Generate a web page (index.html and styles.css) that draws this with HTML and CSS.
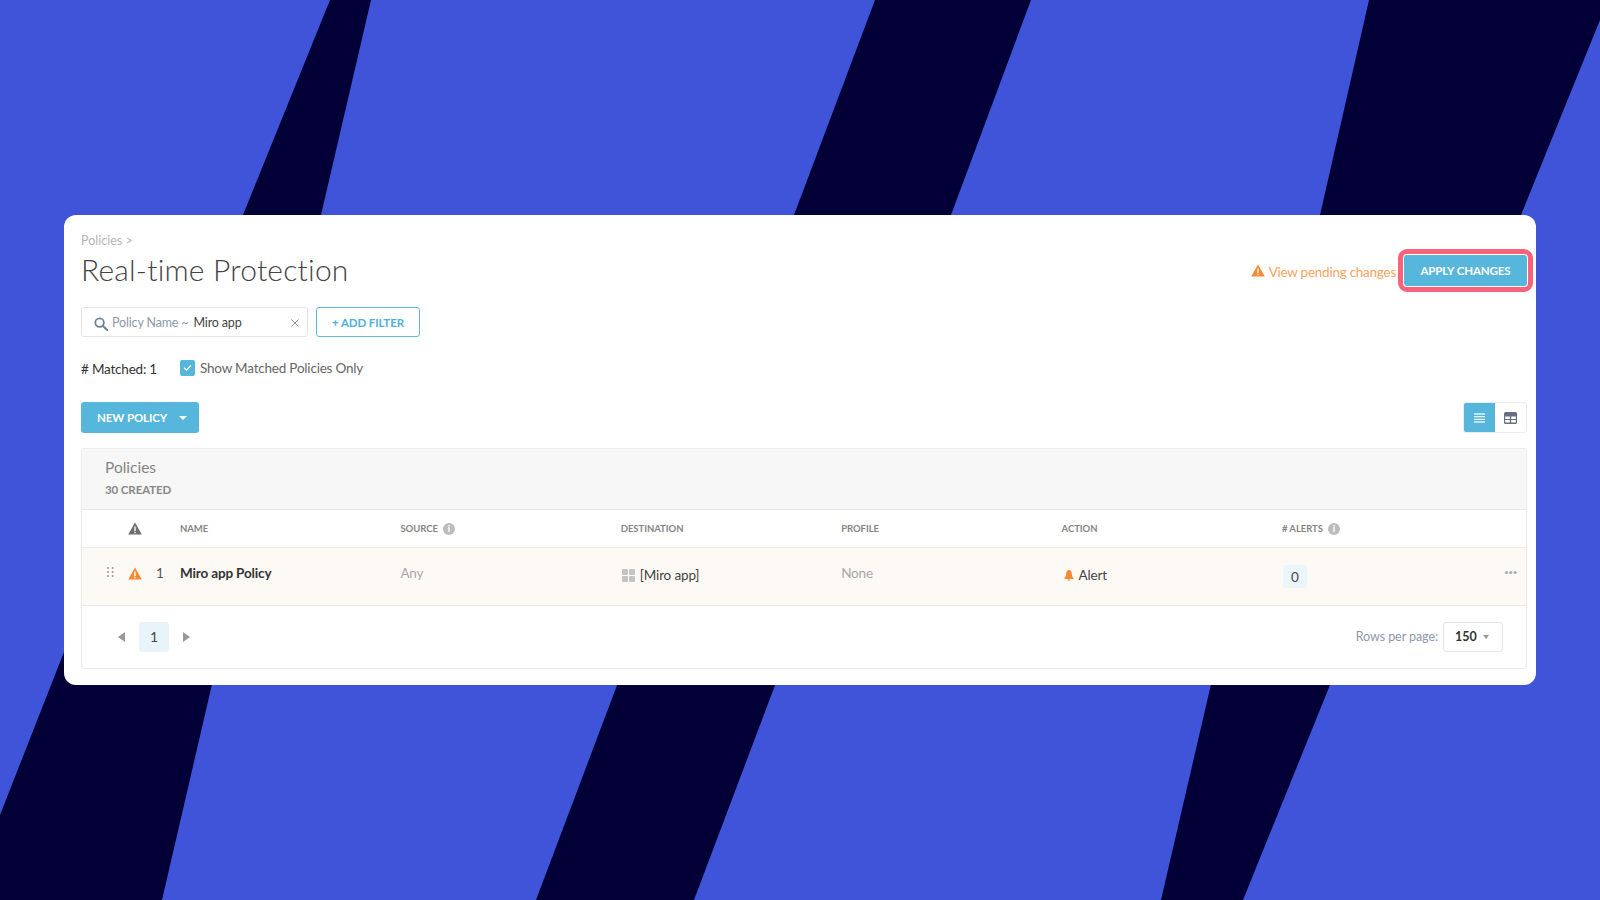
FILE: index.html
```html
<!DOCTYPE html>
<html lang="en">
<head>
    <meta charset="UTF-8">
    <title>Real-time Protection</title>
    <link rel="stylesheet" href="styles.css">
</head>
<body>

    <svg class="stripes" viewBox="0 0 1600 900" aria-hidden="true">
        <polygon points="330,0 371,0 321,215 243,215"/>
        <polygon points="875,0 1031,0 951,215 794,215"/>
        <polygon points="1369,0 1600,0 1600,20 1521,215 1320,215"/>
        <polygon points="64,652 220,652 213,680 162,900 0,900 0,815"/>
        <polygon points="619,680 777,680 694,900 536,900"/>
        <polygon points="1212,680 1332,680 1243,900 1161,900"/>
    </svg>

    <div class="card">
        <div class="page-head">
            <div>
                <div class="breadcrumb">Policies &gt;</div>
                <h1>Real-time Protection</h1>
            </div>
            <div class="head-actions">
                <a class="pending">
                    <svg class="ico-warn" viewBox="0 0 14 13"><path d="M7 .5 13.8 12.6H.2Z" fill="#f58a33"/><rect x="6.3" y="4.6" width="1.4" height="4.4" fill="#fff"/><rect x="6.3" y="9.8" width="1.4" height="1.4" fill="#fff"/></svg>
                    View pending changes
                </a>
                <div class="apply-ring"><button class="btn apply">APPLY CHANGES</button></div>
            </div>
        </div>

        <div class="filters">
            <div class="filter-box">
                <svg class="ico-search" viewBox="0 0 15 15"><circle cx="6" cy="6" r="4.6" fill="none" stroke="#6b7f94" stroke-width="1.8"/><path d="M9.5 9.5 14 14" stroke="#6b7f94" stroke-width="2.2" stroke-linecap="round"/></svg>
                <span class="filter-key">Policy Name ~</span>
                <span class="filter-val">Miro app</span>
                <svg class="ico-x" viewBox="0 0 8 8"><path d="M.5.5 7.5 7.5M7.5.5 .5 7.5" stroke="#8a94a0" stroke-width="1"/></svg>
            </div>
            <button class="add-filter">+ ADD FILTER</button>
        </div>

        <div class="matched-row">
            <span class="matched"># Matched: 1</span>
            <span class="checkbox"><svg viewBox="0 0 15 15"><path d="M4 7.8 6.5 10.2 11 5.2" fill="none" stroke="#fff" stroke-width="1.2"/></svg></span>
            <span class="check-label">Show Matched Policies Only</span>
        </div>

        <div class="toolbar">
            <button class="btn new-policy">NEW POLICY <i class="caret"></i></button>
            <div class="view-toggle">
                <span class="view-btn active">
                    <svg viewBox="0 0 11 10" width="11" height="10"><path d="M0 1h11M0 3.7h11M0 6.4h11M0 9h11" stroke="#e4f4fa" stroke-width="1.3"/></svg>
                </span>
                <span class="view-btn">
                    <svg viewBox="0 0 13 12" width="13" height="12"><rect width="13" height="12" rx="1.5" fill="#667080"/><path d="M1.2 4.4h4.6v2.6H1.2ZM7.2 4.4h4.6v2.6H7.2ZM1.2 8h4.6v2.6H1.2ZM7.2 8h4.6v2.6H7.2Z" fill="#fff"/></svg>
                </span>
            </div>
        </div>

        <div class="panel">
            <div class="panel-head">
                <div class="panel-title">Policies</div>
                <div class="panel-count">30 CREATED</div>
            </div>

            <div class="grid-row col-head">
                <div class="lead">
                    <svg class="ico-warn head-warn" viewBox="0 0 14 13"><path d="M7 .5 13.8 12.6H.2Z" fill="#6f6f6f"/><rect x="6.3" y="4.6" width="1.4" height="4.4" fill="#fff"/><rect x="6.3" y="9.8" width="1.4" height="1.4" fill="#fff"/></svg>
                </div>
                <div>NAME</div>
                <div>SOURCE <i class="info">i</i></div>
                <div>DESTINATION</div>
                <div>PROFILE</div>
                <div>ACTION</div>
                <div># ALERTS <i class="info">i</i></div>
                <div></div>
            </div>

            <div class="grid-row policy-row">
                <div class="lead">
                    <svg class="ico-drag" viewBox="0 0 7 10"><g fill="#8d99a8"><circle cx="1" cy="1" r="1"/><circle cx="5.6" cy="1" r="1"/><circle cx="1" cy="5" r="1"/><circle cx="5.6" cy="5" r="1"/><circle cx="1" cy="9" r="1"/><circle cx="5.6" cy="9" r="1"/></g></svg>
                    <svg class="ico-warn row-warn" viewBox="0 0 14 13"><path d="M7 .5 13.8 12.6H.2Z" fill="#f58a33"/><rect x="6.3" y="4.6" width="1.4" height="4.4" fill="#fff"/><rect x="6.3" y="9.8" width="1.4" height="1.4" fill="#fff"/></svg>
                    <span class="row-num">1</span>
                </div>
                <div class="policy-name">Miro app Policy</div>
                <div class="muted">Any</div>
                <div class="cell-low">
                    <svg class="ico-apps" viewBox="0 0 13 13"><g fill="#c4c4c4"><rect width="6" height="6" rx="1"/><rect x="7" width="6" height="6" rx="1"/><rect y="7" width="6" height="6" rx="1"/><rect x="7" y="7" width="6" height="6" rx="1"/></g></svg>
                    [Miro app]
                </div>
                <div class="muted">None</div>
                <div class="cell-low">
                    <svg class="ico-bell" viewBox="0 0 10 11"><path d="M5 0C6.2 0 7.8 1 7.8 3.4c0 2.6 1 3.4 1.7 4.4V9H.5V7.8c.7-1 1.7-1.8 1.700-4.400C2.2 1 3.800 0 5 0ZM3.600 9.600h2.800C6.300 10.500 5.700 11 5 11S3.700 10.500 3.600 9.600Z" fill="#f58a33"/></svg>
                    Alert
                </div>
                <div><span class="alert-count">0</span></div>
                <div class="more">&middot;&middot;&middot;</div>
            </div>

            <div class="pager">
                <div class="pages">
                    <i class="arrow-left"></i>
                    <span class="page-num">1</span>
                    <i class="arrow-right"></i>
                </div>
                <div class="rows-per">
                    <span class="rows-label">Rows per page:</span>
                    <span class="rows-select">150 <i class="caret grey"></i></span>
                </div>
            </div>
        </div>
    </div>

</body>
</html>
```

FILE: styles.css
```css
* {
    box-sizing: border-box;
}
body {
    margin: 0;
    width: 1600px;
    height: 900px;
    overflow: hidden;
    background: #3f54d9;
    font-family: Lato, "Open Sans", sans-serif;
    color: #333;
    padding: 215px 64px 0;
    position: relative;
}
.stripes {
    position: absolute;
    left: 0;
    top: 0;
    width: 1600px;
    height: 900px;
    fill: #020036;
}
.card {
    position: relative;
    width: 1472px;
    height: 470px;
    background: white;
    border-radius: 12px;
    padding: 17px 9px 0 17px;
}
button {
    font-family: inherit;
    cursor: pointer;
}

/* head */
.page-head {
    display: flex;
    justify-content: space-between;
    height: 75px;
}
.breadcrumb {
    font-size: 12.5px;
    line-height: 16px;
    color: #b4b4b4;
    padding-top: 1px;
}
h1 {
    font-size: 30px;
    line-height: 36px;
    font-weight: 300;
    letter-spacing: 0.2px;
    color: #444;
    margin: 2px 0 0 0;
}
.head-actions {
    display: flex;
    align-items: center;
    height: 43px;
    margin-top: 17px;
    margin-right: -6px;
}
.pending {
    display: flex;
    align-items: center;
    color: #f9a35f;
    font-size: 13.5px;
    letter-spacing: -0.25px;
    margin: 2px 2px 0 0;
}
.ico-warn {
    width: 14px;
    height: 13px;
    display: block;
}
.pending .ico-warn {
    margin-right: 4px;
    margin-top: -3px;
}
.apply-ring {
    width: 135px;
    height: 43px;
    border: 5px solid #f9637a;
    border-radius: 9px;
    background: white;
    padding: 1px;
}
.btn {
    background: #56b6dc;
    color: white;
    border: none;
    border-radius: 3px;
    font-size: 11.5px;
    letter-spacing: -0.1px;
    font-weight: 700;
}
.apply {
    display: block;
    width: 100%;
    height: 100%;
    padding: 0;
}

/* filters */
.filters {
    display: flex;
    gap: 8px;
    height: 30px;
}
.filter-box {
    width: 227px;
    display: flex;
    align-items: center;
    border: 1px solid #e4e4e4;
    border-radius: 3px;
    padding: 1px 8px 0 12px;
    font-size: 12.5px;
    letter-spacing: -0.15px;
    position: relative;
}
.ico-search {
    width: 14px;
    height: 14px;
    margin-right: 5px;
    margin-top: 2px;
}
.filter-key {
    color: #8c99ad;
    margin-left: -1px;
}
.filter-val {
    color: #444;
    margin-left: 5px;
}
.ico-x {
    width: 8px;
    height: 8px;
    margin-left: auto;
}
.add-filter {
    width: 104px;
    background: white;
    border: 1px solid #63bbdf;
    border-radius: 3px;
    color: #4fb1d9;
    font-size: 11.5px;
    letter-spacing: -0.1px;
    font-weight: 700;
    padding: 0;
}
.matched-row {
    display: flex;
    align-items: center;
    height: 20px;
    margin-top: 21px;
    font-size: 13.5px;
    letter-spacing: -0.2px;
}
.matched {
    color: #333;
    width: 99px;
    padding-top: 1px;
}
.checkbox {
    width: 15px;
    height: 16px;
    background: #56b6dc;
    border-radius: 2px;
    margin-right: 5px;
}
.checkbox svg {
    display: block;
    width: 15px;
    height: 15px;
}
.check-label {
    color: #666;
}

/* toolbar */
.toolbar {
    display: flex;
    justify-content: space-between;
    height: 31px;
    margin-top: 24px;
}
.new-policy {
    width: 118px;
    padding: 0;
    display: flex;
    align-items: center;
    padding-left: 16px;
    gap: 12px;
}
.caret {
    display: inline-block;
    width: 0;
    height: 0;
    border-left: 4px solid transparent;
    border-right: 4px solid transparent;
    border-top: 4px solid white;
}
.caret.grey {
    border-top-color: #999;
    border-left-width: 3.5px;
    border-right-width: 3.5px;
    margin-left: 6px;
}
.view-toggle {
    display: flex;
    width: 64px;
    border: 1px solid #ececec;
    border-radius: 3px;
    overflow: hidden;
}
.view-btn {
    flex: 1;
    display: flex;
    align-items: center;
    justify-content: center;
    padding-right: 1px;
}
.view-btn.active {
    background: #56b6dc;
    flex: none;
    width: 32px;
    margin: -1px 0 -1px -1px;
    padding: 0;
}

/* policies panel */
.panel {
    height: 221px;
    margin-top: 15px;
    border: 1px solid #ececec;
    border-radius: 3px;
}
.panel-head {
    height: 61px;
    background: #f7f7f7;
    border-bottom: 1px solid #e8e8e8;
    padding: 8px 0 0 23px;
}
.panel-title {
    font-size: 15.5px;
    line-height: 20px;
    color: #858585;
}
.panel-count {
    font-size: 11.5px;
    letter-spacing: -0.1px;
    line-height: 16px;
    font-weight: 700;
    color: #888;
    margin-top: 5px;
}
.grid-row {
    display: grid;
    grid-template-columns: 98px repeat(6, 220.4px) 1fr;
}
.col-head {
    height: 38px;
    align-items: center;
    font-size: 9.5px;
    letter-spacing: -0.05px;
    font-weight: 700;
    color: #858585;
    border-bottom: 1px solid #ececec;
}
.col-head > div {
    display: flex;
    align-items: center;
    gap: 5px;
}
.info {
    width: 12px;
    height: 12px;
    border-radius: 50%;
    background: #bcbcbc;
    color: white;
    font-size: 9px;
    font-weight: 900;
    font-style: normal;
    line-height: 12px;
    text-align: center;
}
.lead {
    display: flex;
    align-items: center;
}
.head-warn {
    margin-left: 46px;
}
.policy-row {
    height: 58px;
    background: #fdf9f5;
    border-bottom: 1px solid #e8e8e8;
    font-size: 13.5px;
    letter-spacing: -0.15px;
    padding-top: 16px;
    line-height: 18px;
}
.policy-row .lead {
    height: 18px;
}
.ico-drag {
    width: 7px;
    height: 10px;
    margin-left: 25px;
    margin-top: -3px;
}
.row-warn {
    margin-left: 14px;
}
.row-num {
    margin-left: 14px;
    color: #555;
}
.policy-name {
    font-weight: 700;
    color: #333;
}
.muted {
    color: #a8a8a8;
}
.cell-low {
    display: flex;
    align-items: center;
    color: #444;
    margin-top: 2px;
    height: 18px;
}
.ico-apps {
    width: 13px;
    height: 13px;
    margin: 1px 5px 0 1px;
}
.ico-bell {
    width: 10px;
    height: 11px;
    margin: 0 5px 0 2px;
}
.alert-count {
    display: block;
    width: 24px;
    height: 23px;
    line-height: 24px;
    margin-top: 1px;
    margin-left: 1px;
    text-align: center;
    background: #eaf6fb;
    border-radius: 3px;
    color: #444;
}
.more {
    color: #a3adb9;
    font-size: 16px;
    font-weight: 700;
    line-height: 14px;
    padding-left: 2px;
}
.pager {
    height: 62px;
    display: flex;
    justify-content: space-between;
    align-items: center;
    padding: 0 23px 0 36px;
}
.pages {
    display: flex;
    align-items: center;
}
.arrow-left,
.arrow-right {
    width: 0;
    height: 0;
    border-top: 5px solid transparent;
    border-bottom: 5px solid transparent;
}
.arrow-left {
    border-right: 7px solid #999;
}
.arrow-right {
    border-left: 7px solid #999;
}
.page-num {
    width: 30px;
    height: 30px;
    line-height: 30px;
    text-align: center;
    margin: 0 14px 0 14px;
    background: #e8f4f9;
    border-radius: 3px;
    font-size: 14px;
    color: #444;
}
.rows-per {
    display: flex;
    align-items: center;
}
.rows-label {
    font-size: 12.5px;
    letter-spacing: -0.07px;
    color: #8c99ad;
    margin: -2px 5px 0 0;
}
.rows-select {
    display: flex;
    align-items: center;
    width: 60px;
    height: 30px;
    border: 1px solid #e6e6e6;
    border-radius: 3px;
    padding: 0 0 1px 11px;
    font-size: 12.5px;
    font-weight: 700;
    color: #333;
}
```
